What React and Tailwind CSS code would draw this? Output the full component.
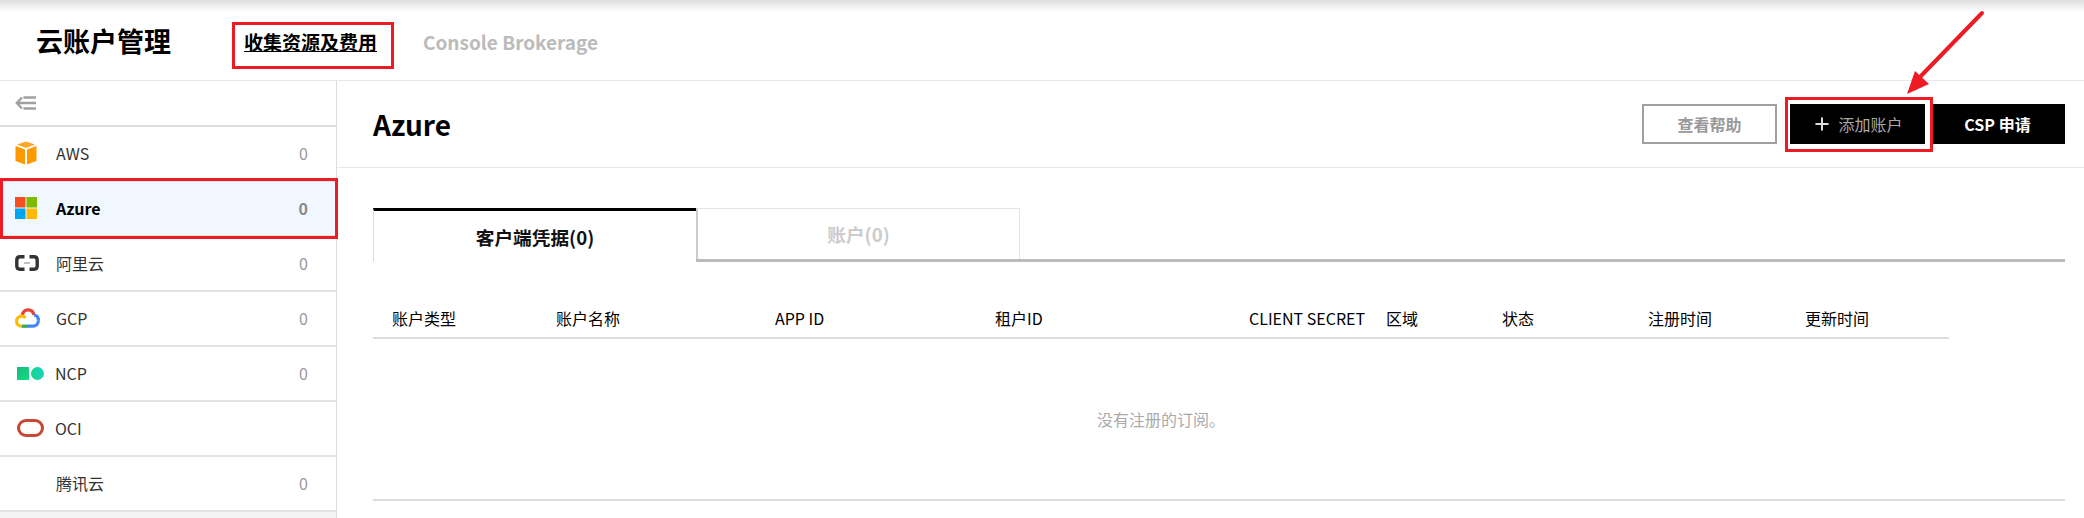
import { Plus } from 'lucide-react'

const FONT = '[font-family:"Noto_Sans_CJK_SC","Noto_Sans_CJK_KR","Noto_Sans",sans-serif]'

function AwsIcon() {
  return (
    <svg width="22" height="24" viewBox="0 0 22 24">
      <path d="M11 0.5 20 3.5 11 7 2 3.5Z" fill="#ffa726" />
      <path d="M0.5 5 10 8.6V23.5L0.5 20Z" fill="#ff9900" />
      <path d="M21.5 5 12 8.6V23.5L21.5 20Z" fill="#ff9900" />
    </svg>
  )
}

function AzureIcon() {
  return (
    <svg width="22" height="22" viewBox="0 0 22 22">
      <rect width="10.5" height="10.5" fill="#f25022" />
      <rect x="11.5" width="10.5" height="10.5" fill="#7fba00" />
      <rect y="11.5" width="10.5" height="10.5" fill="#00a4ef" />
      <rect x="11.5" y="11.5" width="10.5" height="10.5" fill="#ffb900" />
    </svg>
  )
}

function AliIcon() {
  return (
    <svg width="24" height="16" viewBox="0 0 24 16" fill="none" stroke="#333" strokeWidth="3.4">
      <path d="M9.5 1.8H5Q1.8 1.8 1.8 5V11Q1.8 14.2 5 14.2H9.5" />
      <path d="M14.5 1.8H19Q22.2 1.8 22.2 5V11Q22.2 14.2 19 14.2H14.5" />
      <path d="M9 8H15" stroke="#999" strokeWidth="1.2" />
    </svg>
  )
}

function GcpIcon() {
  return (
    <svg width="25" height="20" viewBox="0 0 25 20" fill="none" strokeWidth="3.2">
      <path d="M7 8.2C7.6 4.2 10 1.8 13 1.8" stroke="#ea4335" />
      <path d="M13 1.8C16.2 1.8 18.4 4 19 7" stroke="#ea4335" />
      <path d="M19 7C22 7.4 23.4 9.8 23.4 12.2" stroke="#4285f4" />
      <path d="M23.4 12.2C23.4 15.8 21 18.2 18 18.2H12" stroke="#4285f4" />
      <path d="M12 18.2H6.5" stroke="#34a853" />
      <path d="M6.5 18.2C3.4 18.2 1.6 15.8 1.6 13.2C1.6 10.6 3.6 8.2 7 8.2C8.4 8.2 9.6 8.8 10.6 9.8" stroke="#fbbc05" />
    </svg>
  )
}

function NcpIcon() {
  return (
    <div className="flex items-center gap-[2px]">
      <div className="h-[13px] w-[12px] bg-gradient-to-br from-[#18b87e] to-[#0fe07f]" />
      <div className="h-[13px] w-[13px] rounded-full bg-gradient-to-r from-[#13d68a] to-[#1fd0c0]" />
    </div>
  )
}

function OciIcon() {
  return (
    <svg width="27" height="18" viewBox="0 0 27 18" fill="none">
      <rect x="1.5" y="1.5" width="24" height="15" rx="7.5" stroke="#c74634" strokeWidth="3" />
    </svg>
  )
}

const providers = [
  { name: 'AWS', count: 0, icon: <AwsIcon />, pad: 'pl-[15px]', box: 'w-[41px]' },
  { name: 'Azure', count: 0, icon: <AzureIcon />, pad: 'pl-[15px]', box: 'w-[41px]', active: true },
  { name: '阿里云', count: 0, icon: <AliIcon />, pad: 'pl-[15px]', box: 'w-[41px]' },
  { name: 'GCP', count: 0, icon: <GcpIcon />, pad: 'pl-[15px]', box: 'w-[41px]' },
  { name: 'NCP', count: 0, icon: <NcpIcon />, pad: 'pl-[17px]', box: 'w-[38px]' },
  { name: 'OCI', icon: <OciIcon />, pad: 'pl-[17px]', box: 'w-[38px]' },
  { name: '腾讯云', count: 0, icon: null, pad: 'pl-[15px]', box: 'w-[41px]' },
]

const columns = [
  { label: '账户类型', width: 'w-[183px]' },
  { label: '账户名称', width: 'w-[219px]' },
  { label: 'APP ID', width: 'w-[220px]' },
  { label: '租户ID', width: 'w-[254px]' },
  { label: 'CLIENT SECRET', width: 'w-[137px]' },
  { label: '区域', width: 'w-[116px]' },
  { label: '状态', width: 'w-[146px]' },
  { label: '注册时间', width: 'w-[157px]' },
  { label: '更新时间', width: 'w-[144px]' },
]

function Sidebar() {
  return (
    <aside className="flex w-[337px] shrink-0 flex-col border-r border-[#ddd] bg-[#f4f4f4]">
      <div className="flex h-[46px] items-center border-b-2 border-[#ddd] bg-white pl-[15px]">
        <svg width="22" height="16" viewBox="0 0 22 16" fill="none" stroke="#a0a0a0" strokeWidth="2.4">
          <path d="M7 2.5 1.8 8 7 13.5" />
          <path d="M2.5 8H21M8.5 2.5H21M8.5 13.5H21" />
        </svg>
      </div>
      {providers.map(({ name, count, icon, pad, box, active }) => (
        <div
          key={name}
          className={`flex h-[55px] items-center border-b-2 border-[#e2e2e2] pr-[28px] pb-[1px] text-[16px] ${pad} ${
            active ? 'bg-[#f0f7fe] font-bold text-black' : 'bg-white text-[#333]'
          }`}
        >
          <div className={`flex shrink-0 items-center ${box}`}>{icon}</div>
          <span className="flex-1">{name}</span>
          <span className={active ? 'text-[#888]' : 'text-[#999]'}>{count}</span>
        </div>
      ))}
    </aside>
  )
}

function ActionBar() {
  return (
    <div className="flex h-[87px] items-center justify-between border-b border-[#e8e8e8] pr-[19px] pl-[36px]">
      <h2 className="-mt-[1px] text-[28px] font-bold text-black">Azure</h2>
      <div className="flex items-center">
        <button className="h-10 w-[135px] border-2 border-[#a0a0a0] bg-white text-[16px] font-bold text-[#999]">
          查看帮助
        </button>
        <button className="ml-[13px] flex h-10 w-[135px] items-center justify-center gap-[6px] bg-black text-[16px] text-[#a8a8a8]">
          <Plus size={20} strokeWidth={2.4} color="#ddd" /> 添加账户
        </button>
        <button className="ml-[5px] h-10 w-[135px] bg-black text-[16px] font-bold text-white">CSP 申请</button>
      </div>
    </div>
  )
}

function Tabs() {
  return (
    <div className="mt-[40px] mr-[19px] ml-[36px] flex h-[54px] border-b-[3px] border-[#bbb]">
      <div className="-mb-[3px] flex w-[323px] items-center justify-center border-t-[3px] border-l border-black border-l-[#ddd] bg-white text-[18.67px] font-bold text-[#111]">
        客户端凭据(0)
      </div>
      <div className="flex w-[324px] items-center justify-center border-t border-r border-l-2 border-[#e4e4e4] border-l-[#ccc] text-[18.67px] font-bold text-[#ccc]">
        账户(0)
      </div>
    </div>
  )
}

function SubscriptionTable() {
  return (
    <div className="mt-[22px] mr-[19px] ml-[36px] flex h-[217px] flex-col border-b-2 border-[#ddd]">
      <table className="w-[1576px] table-fixed">
        <thead>
          <tr className="h-[54px] border-b-2 border-[#ddd]">
            {columns.map(({ label, width }) => (
              <th key={label} className={`pt-[14px] text-left text-[16px] font-normal text-black first:pl-[19px] ${width}`}>
                {label}
              </th>
            ))}
          </tr>
        </thead>
        <tbody>
          <tr>
            <td colSpan={9} className="h-[162px] pb-[2px] text-center text-[16px] text-[#aaa]">
              没有注册的订阅。
            </td>
          </tr>
        </tbody>
      </table>
    </div>
  )
}

export default function App() {
  return (
    <div className={`relative h-[518px] w-[2084px] overflow-hidden bg-white ${FONT}`}>
      <div className="h-[12px] bg-gradient-to-b from-[#dedede] to-white" />

      <header className="flex h-[69px] items-center border-b border-[#e8e8e8] pb-[7px] pl-[36px]">
        <h1 className="-mt-[3px] text-[27px] font-bold text-black">云账户管理</h1>
        <nav className="ml-[73px] flex items-center gap-[46px] text-[19px] font-bold">
          <a className="text-black underline">收集资源及费用</a>
          <a className="text-[#bbb]">Console Brokerage</a>
        </nav>
      </header>

      <div className="flex h-[437px]">
        <Sidebar />
        <main className="flex-1">
          <ActionBar />
          <Tabs />
          <SubscriptionTable />
        </main>
      </div>

      {/* red annotations drawn over the screenshot */}
      <div className="absolute top-[22px] left-[232px] h-[47px] w-[162px] border-[3px] border-[#ed1c24]" />
      <div className="absolute top-[178px] left-0 h-[61px] w-[338px] border-[3px] border-[#ed1c24]" />
      <div className="absolute top-[97px] left-[1785px] h-[55px] w-[148px] border-[3px] border-[#ed1c24]" />
      <svg className="absolute top-0 left-[1890px]" width="110" height="100" viewBox="0 0 110 100" fill="none">
        <path d="M92 13 30 77" stroke="#ed1c24" strokeWidth="4" strokeLinecap="round" />
        <path d="M17 94 25 71 39 84Z" fill="#ed1c24" />
      </svg>
    </div>
  )
}
